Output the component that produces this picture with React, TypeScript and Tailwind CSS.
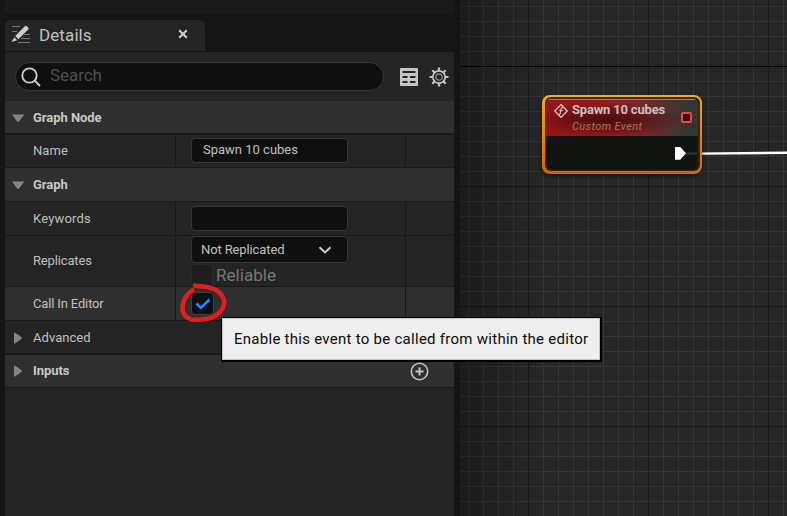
import type { ReactNode } from "react";

function Disclosure({ open }: { open?: boolean }) {
  return (
    <svg className="mr-2 ml-[6px] h-4 w-[14px] shrink-0" viewBox="0 0 14 16" fill="#858585">
      {open ? <path d="M1 4.500h12.300L8 11.600q-.9 1-1.800 0z" /> : <path d="M3 2.300v11.700q5-2.600 7.800-5.400q.5-.5 0-1Q8 4.800 3 2.300z" />}
    </svg>
  );
}

function Category({ label, open, children }: { label: string; open?: boolean; children?: ReactNode }) {
  return (
    <div className={`flex h-full items-center bg-[#2f2f2f] text-[13px] font-bold tracking-[-0.05px] text-[#c8c8c8] ${open ? "pt-px" : ""}`}>
      <Disclosure open={open} />
      <span>{label}</span>
      {children}
    </div>
  );
}

function Property({ label, children, active }: { label: string; children: ReactNode; active?: boolean }) {
  return (
    <div className={`flex h-full ${active ? "bg-[#2f2f2f]" : "bg-[#242424]"}`}>
      <div className="flex w-[170px] items-center pl-7">
        <span className={label === "Keywords" ? "tracking-[0.18px]" : label === "Name" ? "tracking-[0.1px]" : "tracking-[-0.15px]"}>{label}</span>
      </div>
      <div className="w-[231px] border-x border-[#181818] pl-[15px]">{children}</div>
    </div>
  );
}

function Canvas() {
  return (
    <div className="relative h-full w-[327px] overflow-hidden bg-[#262626]">
      <svg className="block" width="327" height="516">
        <defs>
          <pattern id="minor" x="8" y="6" width="15" height="15" patternUnits="userSpaceOnUse">
            <path d="M0 .5H15M.5 0V15" stroke="#353535" />
          </pattern>
          <pattern id="major" x="68" y="66" width="120" height="120" patternUnits="userSpaceOnUse">
            <path d="M0 .5H120M.5 0V120" stroke="#161616" />
          </pattern>
          <linearGradient id="shade">
            <stop stopColor="#000" stopOpacity=".28" />
            <stop offset="1" stopColor="#000" stopOpacity="0" />
          </linearGradient>
        </defs>
        <rect width="327" height="516" fill="url(#minor)" />
        <rect width="327" height="516" fill="url(#major)" />
        <path d="M0 66.500H327" stroke="#000" />
        <rect width="85" height="516" fill="url(#shade)" />
        <path d="M241 153.600L327 152.800" stroke="#fff" strokeWidth="2.400" />
      </svg>
      <EventNode />
    </div>
  );
}

function EventNode() {
  return (
    <div className="absolute top-[94.500px] left-[82px] h-[79px] w-[160px] rounded-[8px] bg-linear-to-b from-[#f5ad0b] to-[#d56600] p-[2.500px] shadow-[0_2px_4px_#0008]">
      <div className="h-full rounded-[6px] bg-[#352508] p-[1.500px]">
        <div className="h-full overflow-hidden rounded-[5px] bg-[#101310] shadow-[inset_0_0_3px_#33230a]">
          <div className="relative h-[37px] border-t border-[#b57b6c] bg-[radial-gradient(ellipse_at_40%_55%,#3b0a0cdd_0%,#48090b88_30%,transparent_60%),linear-gradient(90deg,#9a1515_0%,#931c1e_45%,#702a2b_68%,#353632_92%)]">
            <svg className="absolute top-[3px] left-[7px]" width="16" height="16" viewBox="0 0 16 16" fill="none" stroke="#e3cccc">
              <path d="M8 1.500L14.300 8L8 14.500L1.700 8z" strokeWidth="1.200" />
              <path d="M10.200 4.900Q8.500 4.400 8.100 6L7.200 10.400Q6.800 11.600 5.600 11.200M6.200 7.500H9.700" strokeWidth="1.100" />
            </svg>
            <div className="absolute top-[2px] left-[26px] text-[13px] leading-4 font-bold tracking-[-0.18px] whitespace-nowrap text-[#c9c1c1]">Spawn 10 cubes</div>
            <div className="absolute top-[19px] left-[26px] text-[11px] leading-4 tracking-[0.38px] whitespace-nowrap text-[#a07958] italic">Custom Event</div>
            <div className="absolute top-[12px] left-[135px] h-[11px] w-[11px] rounded-[2px] border-2 border-[#ff3b3b] bg-[#280406]" />
          </div>
          <svg className="mt-[9px] ml-[127px] block" width="24" height="18">
            <path d="M13 8.500H24" stroke="#343634" strokeWidth="2" />
            <path d="M2 2h5.200L13 8.300l-5.800 6.500H2z" fill="#fff" />
          </svg>
        </div>
      </div>
    </div>
  );
}

export default function App() {
  return (
    <div className="relative flex h-[516px] w-[787px] overflow-hidden bg-[#151515] font-['Roboto',sans-serif] text-[13px] text-[#c0c0c0]">
      <div className="ml-[5px] flex h-full w-[449px] flex-col">
        <div className="mb-[7px] h-[13px] shrink-0 bg-[#1a1a1a]" />
        <div className="mb-px flex h-[31px] w-[200px] shrink-0 items-center rounded-t-[5px] bg-[#242424]">
          <svg className="mb-[3px] ml-[5px]" width="22" height="22" viewBox="0 0 22 22" fill="none">
            <path d="M2 3.500h8M2 8.500h5M14 11.500h6M11 15.500h9M8 19.500h12" stroke="#777" strokeWidth="1" />
            <path d="M5.200 13.100L14.900 3.300q1-.9 2 0l1.300 1.300q.9.900 0 1.900L8.400 16.200z" fill="#ccc" />
            <path d="M4.400 14.300l2.800 2.900L1.500 19z" fill="#ccc" />
          </svg>
          <span className="mb-[2px] ml-[7px] w-[135px] text-[17px] leading-5 tracking-[0.1px]">Details</span>
          <svg className="mb-[3px]" width="18" height="18" viewBox="0 0 18 18" stroke="#d0d0d0" strokeWidth="2">
            <path d="M5.200 5.200L12.800 12.800M12.800 5.200L5.200 12.800" />
          </svg>
        </div>
        <div className="flex h-[49px] shrink-0 items-center bg-[#242424] pl-[10px]">
          <div className="flex h-[29px] w-[369px] items-center rounded-full border border-[#383838] bg-[#0f0f0f]">
            <svg className="ml-[5px]" width="20" height="20" viewBox="0 0 20 20" fill="none" stroke="#d0d0d0" strokeWidth="1.800">
              <circle cx="8.500" cy="8.500" r="7.200" />
              <path d="M13.500 13.500L19 19" />
            </svg>
            <span className="mb-px ml-[9px] text-[17px] tracking-[-0.05px] text-[#505050]">Search</span>
          </div>
          <svg className="ml-4" width="18" height="18" viewBox="0 0 18 18">
            <rect width="18" height="18" rx="1" fill="#c5c5c5" />
            <path d="M2.500 3h13v2h-13zM2.500 8h5v2h-5zM10 8h5.500v2H10zM2.500 13h5v2h-5zM10 13h5.500v2H10z" fill="#242424" />
          </svg>
          <svg className="ml-[11px]" width="20" height="20" viewBox="0 0 20 20" fill="none" stroke="#c4c4c4">
            <circle cx="10" cy="10" r="6.200" strokeWidth="1.700" />
            <circle cx="10" cy="10" r="3.200" stroke="#929292" strokeWidth="1.200" />
            <path d="M10 .5v3.500M10 16v3.500M.5 10H4M16 10h3.500M3.300 3.300l2.500 2.500M14.200 14.200l2.500 2.500M3.300 16.700l2.500-2.500M14.200 5.800l2.500-2.500" strokeWidth="2.200" />
          </svg>
        </div>
        <div className="grid shrink-0 grid-rows-[32px_2px_32px_1px_33px_1px_33px_1px_50px_1px_33px_1px_32px_2px_32px_1px]">
          <Category label="Graph Node" open />
          <div className="bg-[#191919]" />
          <Property label="Name">
            <div className="mt-[3px] flex h-[25px] w-[157px] items-center rounded-[4px] border border-[#363636] bg-[#0f0f0f] pb-[2px] pl-[11px]">Spawn 10 cubes</div>
          </Property>
          <div className="bg-[#191919]" />
          <Category label="Graph" open />
          <div className="bg-[#191919]" />
          <Property label="Keywords">
            <div className="mt-1 h-[25px] w-[157px] rounded-[4px] border border-[#363636] bg-[#0f0f0f]" />
          </Property>
          <div className="bg-[#191919]" />
          <Property label="Replicates">
            <div className="flex h-[27px] w-[157px] items-center rounded-[4px] border border-[#363636] bg-[#0f0f0f] pl-[9px]">
              <span className="w-[117px] tracking-[-0.12px]">Not Replicated</span>
              <svg width="14" height="10" viewBox="0 0 14 10" fill="none" stroke="#ccc" strokeWidth="1.900">
                <path d="M1.500 2.200L7 7.500l5.500-5.300" />
              </svg>
            </div>
            <div className="mt-px flex h-[22px] items-center">
              <div className="h-[22px] w-[22px] rounded-[3px] border border-[#292929] bg-[#1e1e1e]" />
              <span className="ml-[3px] text-[17px] leading-5 tracking-[0.05px] text-[#777]">Reliable</span>
            </div>
          </Property>
          <div className="bg-[#191919]" />
          <Property label="Call In Editor" active>
            <div className="mt-[5px] flex h-[23px] w-[23px] items-center justify-center rounded-[4px] border border-[#404040] bg-[#0f0f0f]">
              <svg width="16" height="14" viewBox="0 0 16 14" fill="none" stroke="#168cff" strokeWidth="2.600">
                <path d="M1.500 6.500L6 11L14.500 2.500" />
              </svg>
            </div>
          </Property>
          <div className="bg-[#191919]" />
          <div className="flex h-full items-center bg-[#242424] pt-px tracking-[0.05px]">
            <Disclosure />
            Advanced
          </div>
          <div className="bg-[#191919]" />
          <Category label="Inputs">
            <svg className="mr-[25px] ml-auto" width="19" height="19" viewBox="0 0 19 19" fill="none" stroke="#c4c4c4">
              <circle cx="9.500" cy="9.500" r="8.200" strokeWidth="1.600" />
              <path d="M5.500 9.500h8M9.500 5.500v8" strokeWidth="2" />
            </svg>
          </Category>
          <div className="bg-[#191919]" />
        </div>
        <div className="flex-1 bg-[#242424]" />
      </div>
      <div className="ml-[6px] h-full">
        <Canvas />
      </div>
      <svg className="absolute top-[280px] left-[175px]" width="55" height="45" fill="none" stroke="#e51c1e" strokeWidth="4.500" strokeLinecap="round" strokeLinejoin="round">
        <path d="M17.500 10C12 14 8 20 7.500 27C7 33 10 37 16 39.500C24 40 34 39.500 40 36C46 32 50.500 27 49 20C47 13 41 9 34 7.500C28 6 22 6.500 20 5.500" />
      </svg>
      <div className="absolute top-[317px] left-[221px] flex h-[45px] w-[381px] items-center border-t border-r-2 border-b-2 border-l border-black bg-[#efefef] pl-3 text-[15px] tracking-[0.27px] whitespace-nowrap text-[#0b0b0b] shadow-[inset_0_0_0_1px_#c5c5c5]">
        Enable this event to be called from within the editor
      </div>
    </div>
  );
}
